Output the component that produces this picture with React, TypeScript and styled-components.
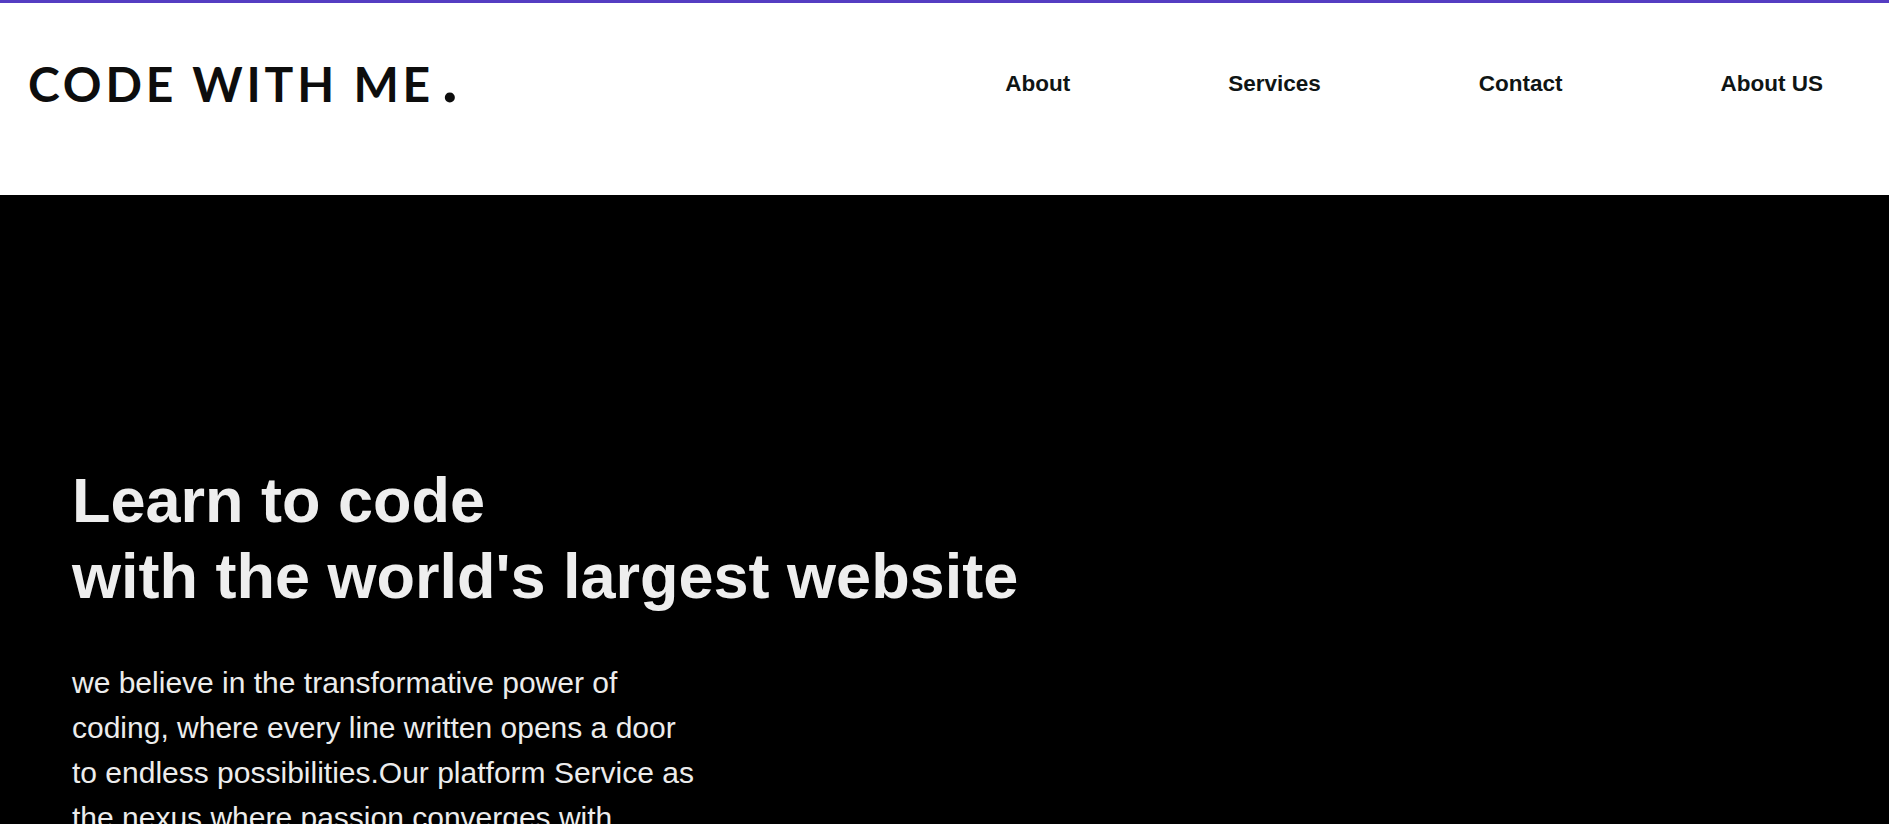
import React from "react";
import styled, { createGlobalStyle } from "styled-components";

const GlobalStyle = createGlobalStyle`
  html, body {
    margin: 0;
    padding: 0;
    background: #000;
  }
  * { box-sizing: border-box; }
`;

const Page = styled.div`
  border-top: 3px solid #553dc2;
  background: #000;
  min-height: 100vh;
`;

const Header = styled.header`
  height: 192px;
  background: #fff;
  display: flex;
  align-items: flex-start;
  justify-content: space-between;
  padding: 52px 66px 0 28px;
`;

const Logo = styled.div`
  font-family: Lato, "Open Sans", sans-serif;
  font-weight: 700;
  font-size: 48px;
  line-height: 57.6px;
  height: 57.6px;
  letter-spacing: 3.8px;
  color: #0d0d0d;
  white-space: nowrap;
`;

const Dot = styled.span`
  font-size: 66px;
  line-height: 0;
  margin-left: 8px;
`;

const Nav = styled.nav`
  display: flex;
  gap: 158px;
  padding-top: 16px;
`;

const NavLink = styled.a`
  font-family: "Liberation Sans", Arial, sans-serif;
  font-weight: 700;
  font-size: 22.5px;
  color: #0f1515;
  text-decoration: none;
  white-space: nowrap;
`;

const Hero = styled.section`
  background: #000;
  padding: 268px 0 80px 72px;
`;

const Title = styled.h1`
  margin: 0;
  font-family: "Liberation Sans", Arial, sans-serif;
  font-weight: 700;
  font-size: 63px;
  line-height: 1.2;
  color: #eeeeee;
`;

const Lead = styled.p`
  margin: 46px 0 0;
  width: 630px;
  font-family: "Liberation Sans", Arial, sans-serif;
  font-size: 30px;
  line-height: 45px;
  color: #ececec;
`;

export default function App() {
  return (
    <>
      <GlobalStyle />
      <Page>
        <Header>
          <Logo>
            CODE WITH ME<Dot>.</Dot>
          </Logo>
          <Nav>
            <NavLink href="#">About</NavLink>
            <NavLink href="#">Services</NavLink>
            <NavLink href="#">Contact</NavLink>
            <NavLink href="#">About US</NavLink>
          </Nav>
        </Header>
        <Hero>
          <Title>
            Learn to code
            <br />
            with the world's largest website
          </Title>
          <Lead>
            we believe in the transformative power of coding, where every line
            written opens a door to endless possibilities.Our platform Service
            as the nexus where passion converges with expertise, guiding you
            through every step of your journey.
          </Lead>
        </Hero>
      </Page>
    </>
  );
}
